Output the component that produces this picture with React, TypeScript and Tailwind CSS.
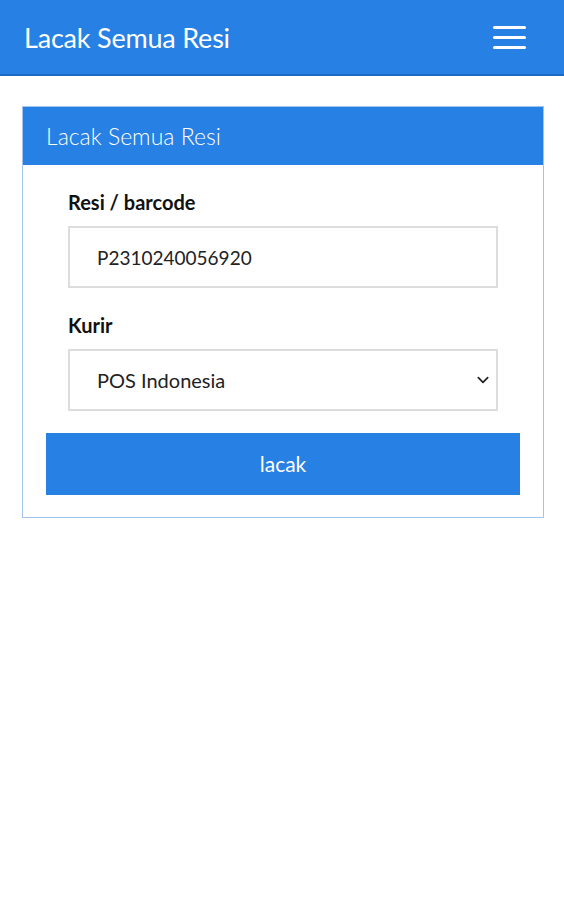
const App = () => {
  return (
    <div className="min-h-[900px] bg-white font-['Lato','Noto_Sans',sans-serif]">
      {/* navbar */}
      <header className="h-[76px] bg-[#2780e3] border-b-2 border-[#1b6bc4] flex items-center justify-between pl-6 pr-[38px]">
        <h1 className="text-white text-[27px] tracking-[-0.2px] pt-[2px]">Lacak Semua Resi</h1>
        <button className="flex flex-col gap-[7px] w-[33px]">
          <span className="block h-[3px] rounded-full bg-white"></span>
          <span className="block h-[3px] rounded-full bg-white"></span>
          <span className="block h-[3px] rounded-full bg-white"></span>
        </button>
      </header>

      <div className="pl-[22px] pr-[20px] pt-[30px]">
        <div className="border border-[#a3c3ef]">
          <div className="h-[58px] bg-[#2780e3] flex items-center px-[23px]">
            <h2 className="text-white text-[23px] font-light">Lacak Semua Resi</h2>
          </div>

          <div className="px-[23px] pt-[22px] pb-[22px]">
            <div className="px-[22px]">
              <label className="block text-[20px] font-bold text-[#111] mb-[9px]">Resi / barcode</label>
              <input
                defaultValue="P2310240056920"
                className="w-full h-[62px] border-2 border-[#dcdcdc] px-[27px] text-[19px] text-[#222] outline-none"
              />

              <label className="block text-[20px] font-bold text-[#111] mt-[22px] mb-[9px]">Kurir</label>
              <div className="relative">
                <select className="w-full h-[62px] border-2 border-[#dcdcdc] px-[27px] text-[20px] text-[#222] bg-white appearance-none outline-none">
                  <option>POS Indonesia</option>
                  <option>JNE</option>
                  <option>TIKI</option>
                </select>
                <svg
                  className="absolute right-[8px] top-1/2 -translate-y-1/2 pointer-events-none"
                  width="14"
                  height="14"
                  viewBox="0 0 24 24"
                  fill="none"
                  stroke="#222"
                  strokeWidth="3"
                  strokeLinecap="round"
                  strokeLinejoin="round"
                >
                  <path d="M4 8l8 8 8-8" />
                </svg>
              </div>
            </div>

            <button className="mt-[22px] w-full h-[62px] bg-[#2780e3] text-white text-[21px]">lacak</button>
          </div>
        </div>
      </div>
    </div>
  );
};

export default App;
